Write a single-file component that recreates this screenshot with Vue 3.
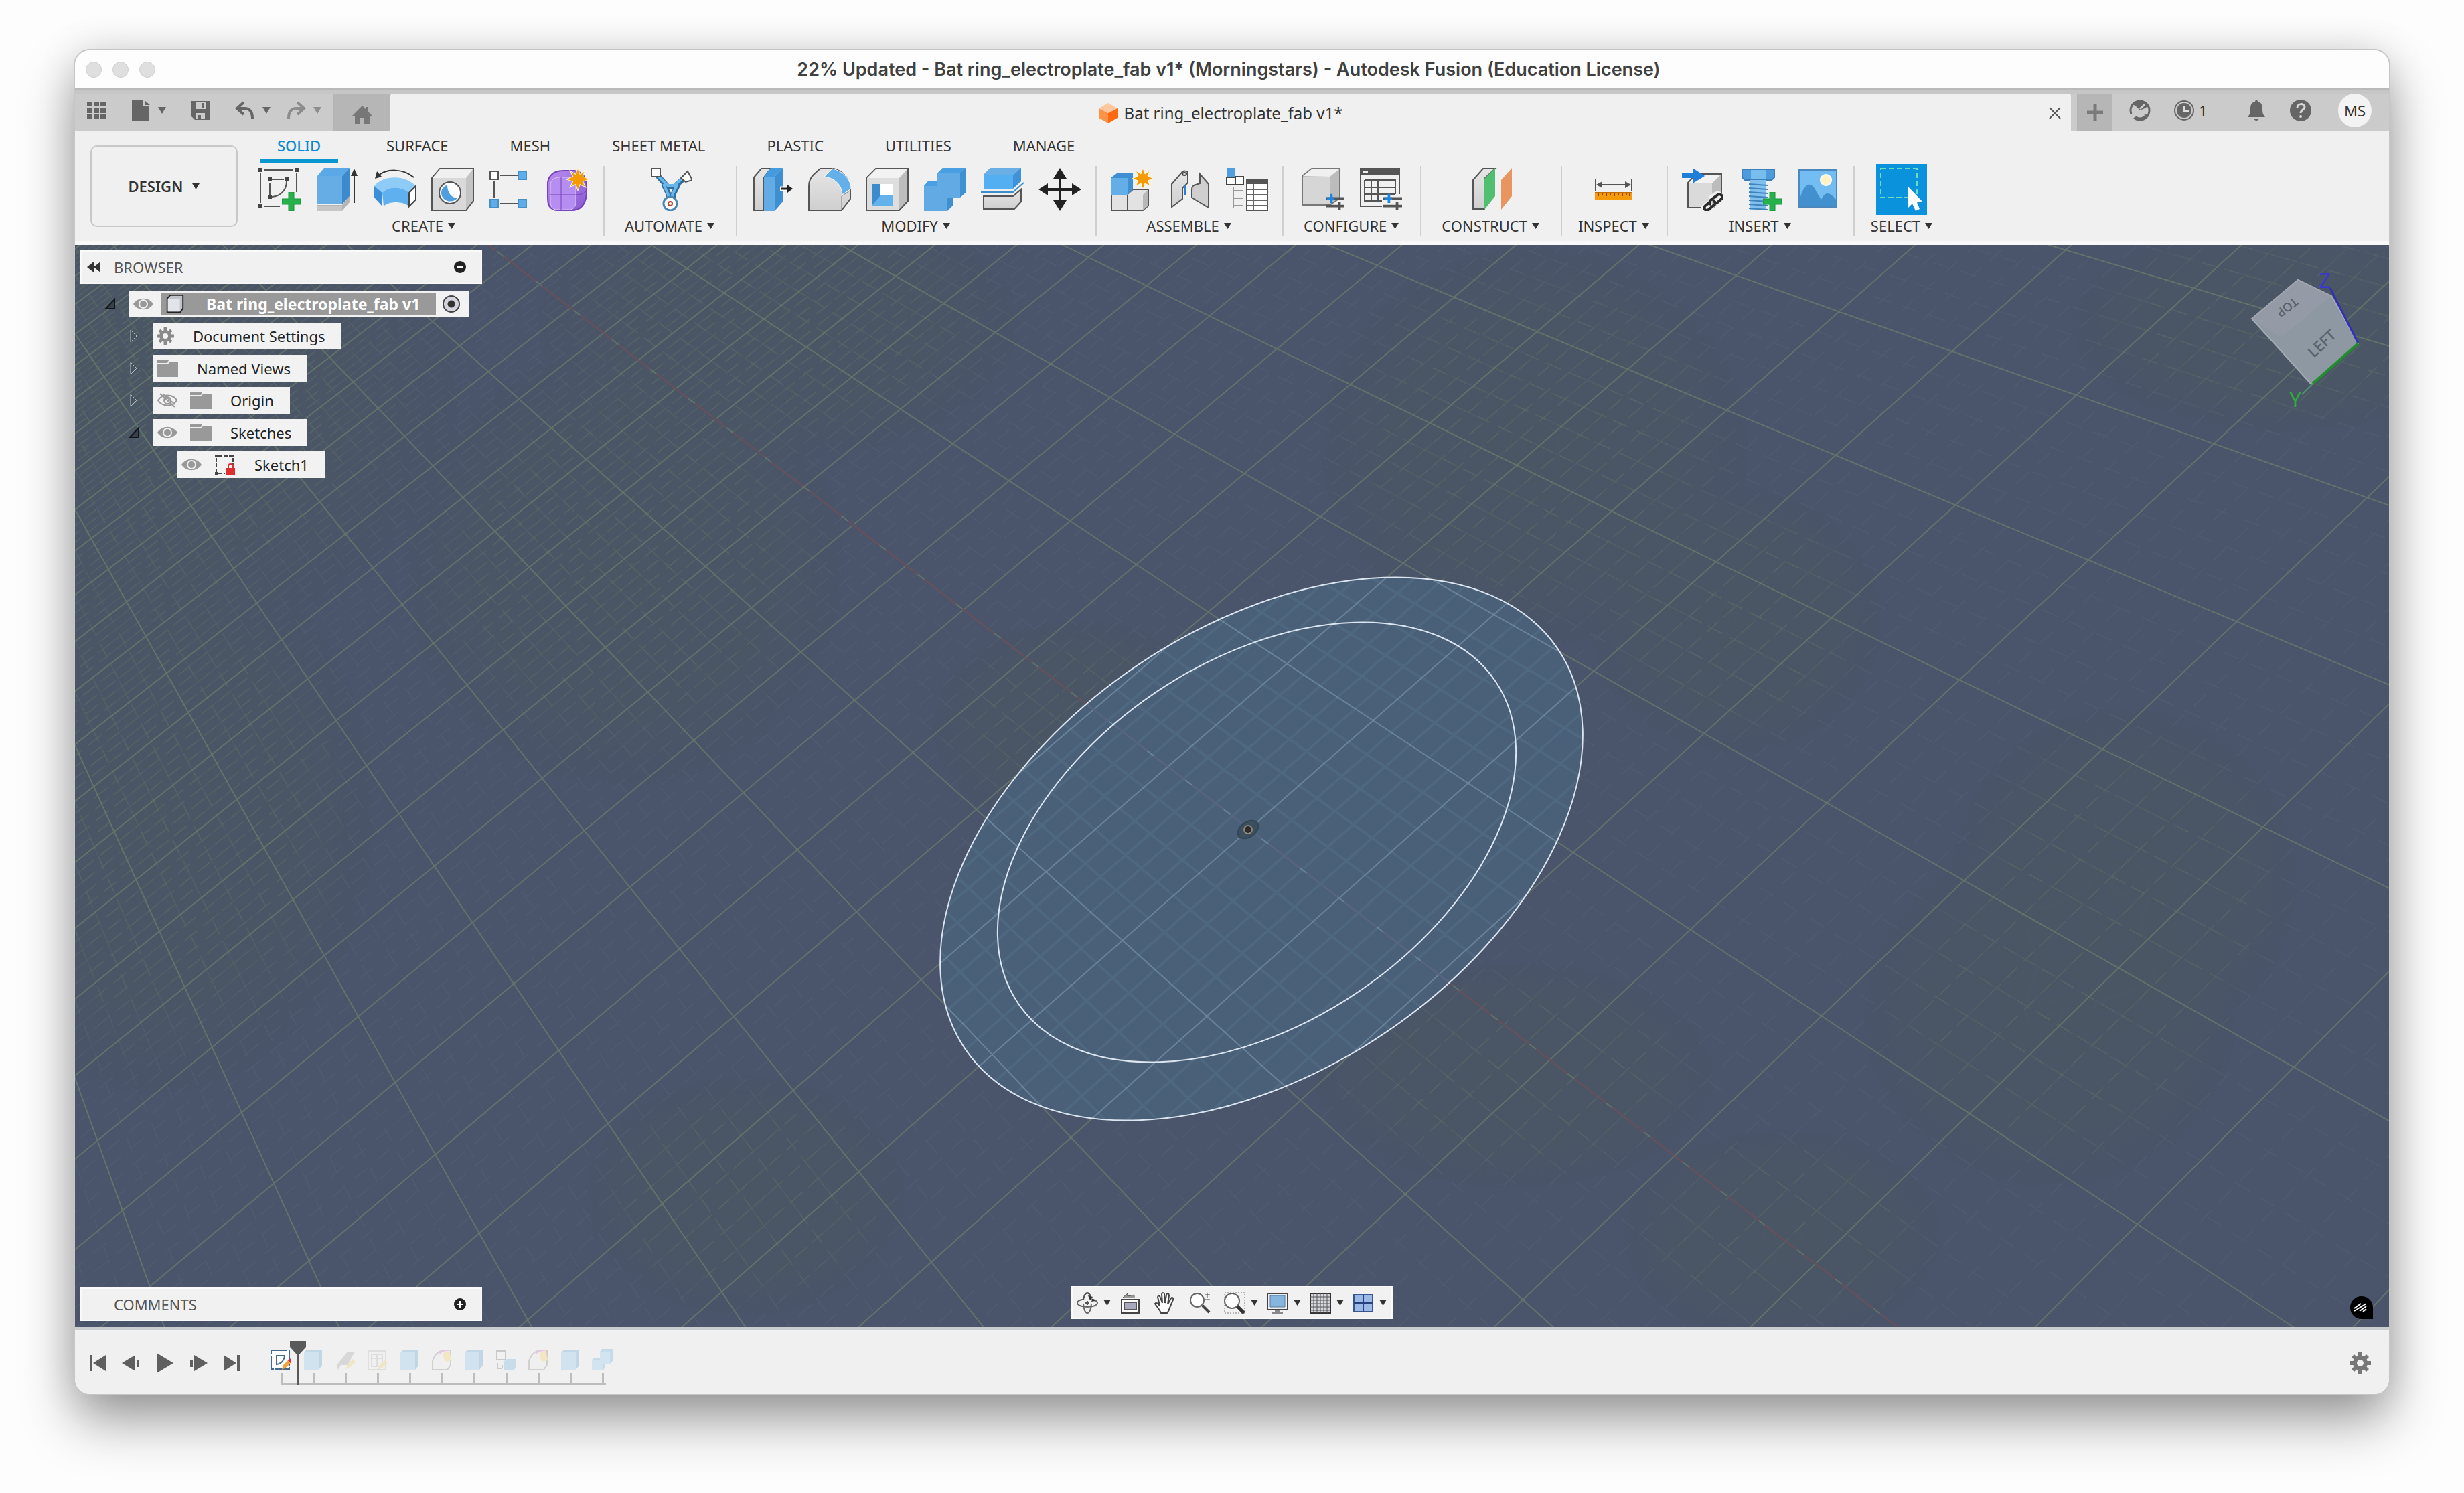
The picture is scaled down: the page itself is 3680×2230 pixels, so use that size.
<template>
  <div class="desktop">
    <svg class="sprite" aria-hidden="true">
      <defs>
        <linearGradient id="g-grey" x1="0" y1="0" x2="0" y2="1">
          <stop offset="0" stop-color="#e6e6e6" /><stop offset="1" stop-color="#cfcfcf" />
        </linearGradient>
        <linearGradient id="g-purple" x1="0" y1="0" x2="1" y2="1">
          <stop offset="0" stop-color="#b98cf0" /><stop offset="1" stop-color="#8a5ad0" />
        </linearGradient>

        <symbol id="i-caret" viewBox="0 0 14 12"><path d="M1 1h12L7 11z" fill="currentColor" /></symbol>
        <symbol id="i-apps" viewBox="0 0 32 32">
          <path d="M2 3h8v7H2zM12 3h8v7h-8zM22 3h8v7h-8zM2 12h8v8H2zM12 12h8v8h-8zM22 12h8v8h-8zM2 22h8v7H2zM12 22h8v7h-8zM22 22h8v7h-8z" fill="#666" />
        </symbol>
        <symbol id="i-file" viewBox="0 0 32 32">
          <path d="M3 0h17v10h9v22H3z" fill="#666" /><path d="M22 1l8 7h-8z" fill="#666" />
        </symbol>
        <symbol id="i-save" viewBox="0 0 32 32">
          <path d="M2 2h28v28H7l-5-5z" fill="#666" /><path d="M8 4h16v10H8zM9 20h13v9H9z" fill="#cbcbcb" />
          <path d="M17 5h4v7h-4zM12 23h4v6h-4z" fill="#666" />
        </symbol>
        <symbol id="i-undo" viewBox="0 0 32 32">
          <path d="M14 4L4 13l10 9M5 13h10c8 0 12 5 12 15" fill="none" stroke="#666" stroke-width="4" />
        </symbol>
        <symbol id="i-redo" viewBox="0 0 32 32">
          <path d="M18 4l10 9-10 9M27 13H17C9 13 5 18 5 28" fill="none" stroke="#8d8d8d" stroke-width="4" />
        </symbol>
        <symbol id="i-home" viewBox="0 0 32 32">
          <path d="M16 3L1 18h4v12h8v-9h6v9h8V18h4l-6-6V5h-4v3z" fill="#777" />
        </symbol>
        <symbol id="i-doc" viewBox="0 0 32 32">
          <path d="M16 1l14 8-14 7L2 9z" fill="#ffc79e" /><path d="M2 9l14 7v15L2 23z" fill="#ff9345" />
          <path d="M30 9l-14 7v15l14-8z" fill="#ff6a10" />
        </symbol>
        <symbol id="i-ext" viewBox="0 0 32 32">
          <circle cx="16" cy="16" r="14" fill="none" stroke="#666" stroke-width="3" /><path d="M5 6C12-1 25 1 30 10L16 16z" fill="#666" />
          <path d="M27 22c-4 8-13 10-20 5l6-4z" fill="#666" />
          <path d="M9 11l12 12c-4 3-8 2-11-1l-5 5-2-3 5-5c-2-3-2-6 1-8zM16 14l7-7M20 19l7-7" fill="#cbcbcb" stroke="#cbcbcb" stroke-width="3" />
        </symbol>
        <symbol id="i-clock" viewBox="0 0 32 32">
          <circle cx="16" cy="16" r="14" fill="none" stroke="#666" stroke-width="2" /><circle cx="16" cy="16" r="11" fill="#666" />
          <path d="M16 9v8h7" fill="none" stroke="#ddd" stroke-width="2" />
        </symbol>
        <symbol id="i-bell" viewBox="0 0 32 32">
          <path d="M14 3c0-3 4-3 4 0 6 1 7 6 7 11 0 6 1 8 4 12H3c3-4 4-6 4-12C7 9 8 4 14 3z" fill="#666" />
          <path d="M12 28h8c-1 4-7 4-8 0z" fill="#666" />
        </symbol>
        <symbol id="i-help" viewBox="0 0 32 32">
          <circle cx="16" cy="16" r="16" fill="#666" />
          <path d="M11 12c0-7 11-7 11-1 0 4-6 4-6 9" fill="none" stroke="#d8d8d8" stroke-width="3" /><circle cx="16" cy="25" r="2" fill="#d8d8d8" />
        </symbol>

        <symbol id="i-star" viewBox="0 0 32 32">
          <path d="M16 0l3 9 7-5-3 8 9 4-9 3 4 8-8-4-3 9-3-9-8 4 4-8-9-3 9-4-4-8 8 5z" fill="#f59b00" stroke="#fff6dc" />
        </symbol>
        <symbol id="i-plus-green" viewBox="0 0 28 28">
          <path d="M10 0h8v10h10v8H18v10h-8V18H0v-8h10z" fill="#25b24a" stroke="#1d9440" />
        </symbol>

        <symbol id="i-sketch" viewBox="0 0 64 64">
          <g fill="none" stroke="#555" stroke-width="2"><path d="M8 3h44M3 8v44M8 57h24M57 8v28" /><path d="M20 17h18M17 22v18M42 20c0 12-8 22-22 23" /></g>
          <path d="M0 0h6v6H0zM54 0h6v6h-6zM0 54h6v6H0zM14 14h6v6h-6zM39 14h6v6h-6zM14 40h6v6h-6z" fill="#444" />
          <use href="#i-plus-green" x="35" y="36" width="28" height="28" />
        </symbol>
        <symbol id="i-extrude" viewBox="0 0 64 64">
          <path d="M2 55h37l11-13v9L39 64H2z" fill="#b5b5b5" /><path d="M2 56h37v8H2z" fill="#c6c6c6" />
          <path d="M2 12L12 0h38L39 12z" fill="#5ba8e6" /><path d="M2 12h37v42H2z" fill="#66ade6" />
          <path d="M39 12L50 0v42L39 54z" fill="#3c89cb" />
          <path d="M57 52V8" stroke="#333" stroke-width="2" /><path d="M57 1l5 11H52z" fill="#333" />
        </symbol>
        <symbol id="i-revolve" viewBox="0 0 64 64">
          <path d="M6 12C20 0 44 1 60 14" fill="none" stroke="#333" stroke-width="2" /><path d="M2 16l3-11 7 8z" fill="#333" />
          <path d="M1 27C14 10 48 10 63 27L53 37C42 27 22 27 13 37z" fill="#8ecbf7" />
          <path d="M13 37C22 27 42 27 53 37v20c-10-8-30-8-38 0z" fill="#5fb0ee" /><path d="M1 27l12 10v20L1 44z" fill="#3a8fd6" />
          <path d="M63 27v20L53 57V37z" fill="#fff" stroke="#444" stroke-width="2" />
        </symbol>
        <symbol id="i-hole" viewBox="0 0 64 64">
          <path d="M1 15L13 1h50v48L52 63H1z" fill="#c4c4c4" stroke="#555" stroke-width="2" /><path d="M2 15h50v47H2z" fill="#d9d9d9" />
          <path d="M2 15L13 2h49L52 15z" fill="#f0f0f0" />
          <circle cx="28" cy="37" r="16" fill="#fff" stroke="#555" stroke-width="2" />
          <path d="M24 25c0 12 6 19 15 20-8 9-24 4-24-8 0-5 4-10 9-12z" fill="#4f9fe0" />
        </symbol>
        <symbol id="i-pattern" viewBox="0 0 64 64">
          <path d="M17 11h26M17 53h26M8 20v24" stroke="#555" stroke-width="2" /><path d="M2 5h12v12H2z" fill="#fff" stroke="#555" stroke-width="2" />
          <path d="M44 5h12v12H44zM2 47h12v12H2zM44 47h12v12H44z" fill="#5cade9" stroke="#4a8fc4" stroke-width="2" />
        </symbol>
        <symbol id="i-form" viewBox="0 0 64 64">
          <path d="M2 22C4 8 14 3 30 4h12c12 2 18 10 18 24v12c-2 14-8 23-22 23H16C4 62 2 54 2 44z" fill="url(#g-purple)" stroke="#7443bd" stroke-width="2" />
          <path d="M6 26c0-8 6-12 14-12h16c6 0 8 5 8 12v24c0 8-4 12-10 12H16C8 62 6 57 6 48z" fill="#b68df0" stroke="#dcc6fb" />
          <path d="M6 40h38c8 0 12-2 16-6M22 14v48" fill="none" stroke="#7443bd" />
          <use href="#i-star" x="30" y="0" width="34" height="34" />
        </symbol>
        <symbol id="i-automate" viewBox="0 0 64 64">
          <path d="M12 10l16 18h10l14-12M30 50V40L22 24M36 50V40l8-16" fill="none" stroke="#2f6f9f" stroke-width="8" />
          <path d="M12 10l16 16h10l14-12M29 52V40L22 24M35 52V40l8-16" fill="none" stroke="#69b7ea" stroke-width="4" />
          <path d="M4 1h13v12H4zM58 5l7 13-10 3-7-6z" fill="#fff" stroke="#555" stroke-width="2" />
          <circle cx="32" cy="53" r="10" fill="#fff" stroke="#4a86b4" stroke-width="3" /><circle cx="32" cy="53" r="3" fill="#fff" stroke="#b5452f" stroke-width="2" />
        </symbol>
        <symbol id="i-presspull" viewBox="0 0 64 64">
          <path d="M5 14L16 1h14L20 14v49H5z" fill="url(#g-grey)" stroke="#555" stroke-width="2" />
          <path d="M20 13L30 0h18L36 13z" fill="#459be0" /><path d="M20 13h16v51H20z" fill="#62abe5" /><path d="M36 13L48 0v50L36 64z" fill="#3f8ed2" />
          <path d="M44 31h12" stroke="#fff" stroke-width="7" /><path d="M46 31h12" stroke="#222" stroke-width="3" /><path d="M55 25l8 6-8 6z" fill="#222" />
        </symbol>
        <symbol id="i-fillet" viewBox="0 0 64 64">
          <path d="M1 63V27C1 20 4 14 8 10L18 1h20c16 4 25 17 25 33v12L50 63z" fill="url(#g-grey)" stroke="#555" stroke-width="2" />
          <path d="M24 13L36 1c18 4 28 18 28 30L51 40C50 26 42 16 24 13z" fill="#64b0ea" stroke="#fff" />
          <path d="M50 62V42l12-8" fill="none" stroke="#888" />
        </symbol>
        <symbol id="i-shell" viewBox="0 0 64 64">
          <path d="M1 15L15 1h48v48L50 63H1z" fill="#bdbdbd" stroke="#555" stroke-width="2" /><path d="M2 15h48v47H2z" fill="#dedede" /><path d="M2 15L15 2h47L50 15z" fill="#f2f2f2" />
          <path d="M9 24h32v32H9z" fill="#fff" /><path d="M9 24h13v22L9 56z" fill="#3c8bcd" /><path d="M9 56l13-15h19v15z" fill="#64b2ec" />
        </symbol>
        <symbol id="i-combine" viewBox="0 0 64 64">
          <path d="M1 27l6-7h14V8l8-8h35v36l-9 8H44v12l-8 8H1z" fill="#3f8fd3" /><path d="M1 27h20V8h34v36H36v20H1z" fill="#62aae3" />
          <path d="M21 8l8-8h35l-9 8zM1 27l6-7h14v7z" fill="#4a9ee2" />
        </symbol>
        <symbol id="i-split" viewBox="0 0 64 64">
          <path d="M4 10L14 0h46v20L48 31H4z" fill="#3f92d8" /><path d="M4 11h44v20H4z" fill="#53aff2" /><path d="M4 11L14 0h46L48 11z" fill="#69aee4" />
          <path d="M0 36h48l16-14" fill="none" stroke="#3d8fcb" stroke-width="2" />
          <path d="M4 42h44l12-10v18L50 61H4z" fill="url(#g-grey)" stroke="#555" stroke-width="2" />
        </symbol>
        <symbol id="i-move" viewBox="0 0 64 64">
          <path d="M32 10v44M10 32h44" stroke="#222" stroke-width="4" /><path d="M32 0l10 16H22zM32 64l10-16H22zM0 32l14-9v18zM64 32l-14-9v18z" fill="#222" />
        </symbol>
        <symbol id="i-component" viewBox="0 0 64 64">
          <path d="M2 39h24v24H2zM26 39l8-7h23v24l-8 7H26z" fill="#e2e2e2" stroke="#555" stroke-width="2" /><path d="M49 40l8-8v24l-8 7z" fill="#b8b8b8" />
          <path d="M2 14l8-6h24v24l-8 8H2z" fill="#3f8fd3" /><path d="M2 15h24v25H2z" fill="#64aee8" />
          <use href="#i-star" x="33" y="0" width="32" height="32" />
        </symbol>
        <symbol id="i-joint" viewBox="0 0 64 64">
          <path d="M6 24L20 8c3-5 10-4 10 0v14L22 30v16L6 58z" fill="url(#g-grey)" stroke="#555" stroke-width="2" />
          <path d="M61 24L48 9v14l-9 3c-3 2-3 4-3 8v10l8 5 17 10z" fill="#cfcfcf" stroke="#555" stroke-width="2" />
          <path d="M26 26v14" stroke="#2a7fd0" stroke-width="2" /><ellipse cx="25" cy="9" rx="3" ry="2" fill="none" stroke="#444" stroke-width="2" />
        </symbol>
        <symbol id="i-bom" viewBox="0 0 64 64">
          <path d="M2 0h13v13H2z" fill="#4f9fe0" /><path d="M2 14h13v11H2zM15 13h12v12H15z" fill="#fff" stroke="#444" stroke-width="2" />
          <path d="M12 28v32M12 34h14M12 45h14M12 56h14" stroke="#999" stroke-width="2" /><path d="M32 17h32v46H32z" fill="#fff" stroke="#555" stroke-width="2" />
          <path d="M31 16h34v8H31z" fill="#555" /><path d="M42 24v39M32 32h32M32 40h32M32 48h32M32 56h32" stroke="#666" stroke-width="2" />
        </symbol>
        <symbol id="i-adjust" viewBox="0 0 30 30">
          <path d="M0 9h30M0 21h30" stroke="#555" stroke-width="4" /><path d="M22 15v12" stroke="#555" stroke-width="4" /><path d="M9 2v14M2 9h12" stroke="#1e86e0" stroke-width="4" />
        </symbol>
        <symbol id="i-configure" viewBox="0 0 64 64">
          <path d="M1 12L15 1h42v44L42 55H1z" fill="#bcbcbc" stroke="#777" stroke-width="2" /><path d="M2 13h40v41H2z" fill="#d6d6d6" /><path d="M2 12L15 2h41L42 13z" fill="#f0f0f0" />
          <use href="#i-adjust" x="36" y="37" width="28" height="28" />
        </symbol>
        <symbol id="i-conftable" viewBox="0 0 64 64">
          <path d="M2 1h58v38M2 1v56h32" fill="none" stroke="#555" stroke-width="2" /><path d="M1 0h60v11H1z" fill="#555" /><path d="M5 4h8v4H5z" fill="#eee" />
          <path d="M8 18h46v21M8 18v31h26M8 29h46M8 39h46M18 18v31M28 18v31" fill="none" stroke="#555" stroke-width="2" />
          <use href="#i-adjust" x="36" y="37" width="28" height="28" />
        </symbol>
        <symbol id="i-plane" viewBox="0 0 64 64">
          <path d="M5 18L20 1h18L22 16v45H5z" fill="url(#g-grey)" stroke="#555" stroke-width="2" />
          <path d="M22 16L38 0v42L22 62z" fill="#50c070" /><path d="M47 18L63 0v42L47 62z" fill="#e8955f" />
        </symbol>
        <symbol id="i-measure" viewBox="0 0 64 64">
          <path d="M5 17v17M59 17v17M10 25h44" stroke="#555" stroke-width="2" /><path d="M6 25l9-5v10zM58 25l-9-5v10z" fill="#555" />
          <path d="M4 36h56v12H4z" fill="#f59b0b" /><path d="M4 37h56" stroke="#c46a00" stroke-width="2" />
          <path d="M9 37v5M15 37v3M21 37v5M27 37v3M33 37v5M39 37v3M45 37v5M51 37v3M56 37v5" stroke="#8a4a00" stroke-width="2" />
        </symbol>
        <symbol id="i-derive" viewBox="0 0 64 64">
          <path d="M10 22L22 9h38v36L48 59H10z" fill="#bcbcbc" stroke="#555" stroke-width="2" /><path d="M11 23h35v35H11z" fill="#dadada" /><path d="M11 23L22 10h37L46 23z" fill="#f2f2f2" />
          <path d="M1 8h16V0l18 12-18 11v-8H1z" fill="#1e7fdb" />
          <g fill="none"><path d="M44 51l-8 5c-8 7 0 10 5 5l6-6M48 53l7-5c8-6 2-12-4-8l-8 6" stroke="#f0f0f0" stroke-width="8" />
          <path d="M44 50l-7 5c-6 5 0 11 5 6l7-6c4-4 0-6-2-5M45 54c-3 0-4-4 0-7l8-6c6-5 11 2 6 6l-7 6" stroke="#2b2b2b" stroke-width="4" /></g>
        </symbol>
        <symbol id="i-bolt" viewBox="0 0 64 64">
          <path d="M5 2h48v12l-4 4H9l-4-4z" fill="#4d9bdc" stroke="#3b7fb8" stroke-width="2" /><path d="M18 3h22v14H18z" fill="#77bdee" /><path d="M17 18h24v44H17z" fill="#7fc0ee" />
          <path d="M15 24l28 2M15 30l28 2M15 36l28 2M15 42l28 2M15 48l28 2M15 54l28 2M15 60l28 2" stroke="#3f83bb" stroke-width="2" />
          <use href="#i-plus-green" x="36" y="36" width="28" height="28" />
        </symbol>
        <symbol id="i-canvas" viewBox="0 0 64 64">
          <path d="M4 3h56v55H4z" fill="#74bdf3" stroke="#4a88bd" stroke-width="2" /><path d="M5 46C12 22 22 18 30 36l7 11c6-12 12-12 22 0v10H5z" fill="#4390cf" />
          <circle cx="44" cy="18" r="8" fill="#fff3c4" stroke="#fff" stroke-width="2" />
        </symbol>
        <symbol id="i-select" viewBox="0 0 76 76">
          <path d="M0 0h76v76H0z" fill="#0a92dd" /><path d="M7 7h54v43H7z" fill="none" stroke="#6fdcc0" stroke-width="2" stroke-dasharray="8 4" />
          <path d="M48 34v31l6-6 5 11 6-3-4-10h9z" fill="#fff" />
        </symbol>

        <symbol id="i-eye" viewBox="0 0 32 32">
          <path d="M1 16C8 5 24 5 31 16 24 27 8 27 1 16z" fill="#999" /><circle cx="16" cy="16" r="6" fill="none" stroke="#eee" stroke-width="2" />
        </symbol>
        <symbol id="i-eye-off" viewBox="0 0 32 32">
          <path d="M2 16C8 6 24 6 30 16 24 26 8 26 2 16zM5 6l22 20M9 6l18 16" fill="none" stroke="#999" stroke-width="2" /><circle cx="16" cy="16" r="5" fill="none" stroke="#999" stroke-width="2" />
        </symbol>
        <symbol id="i-folder" viewBox="0 0 32 32"><path d="M0 4h18l-2 4H0zM0 10h17l2-4h13v23H0z" fill="#999" /></symbol>
        <symbol id="i-gear" viewBox="0 0 32 32">
          <path d="M13 0h6v6h-6zM13 26h6v6h-6zM0 13h6v6H0zM26 13h6v6h-6zM3 7l4-4 5 5-4 4zM25 3l4 4-5 5-4-4zM3 25l4 4 5-5-4-4zM29 25l-4 4-5-5 4-4z" fill="currentColor" />
          <circle cx="16" cy="16" r="8" fill="none" stroke="currentColor" stroke-width="6" />
        </symbol>
        <symbol id="i-body" viewBox="0 0 32 32">
          <path d="M4 7l5-5h20v21l-4 6H4z" fill="#c3c3cc" stroke="#222" stroke-width="2" /><path d="M5 8h19v20H5z" fill="#e3e3ea" />
        </symbol>
        <symbol id="i-sketchlock" viewBox="0 0 32 32">
          <path d="M6 3h20M3 6v22M6 29h10M28 6v10" stroke="#444" stroke-width="2" stroke-dasharray="6 2" /><path d="M1 1h4v4H1zM26 1h4v4h-4zM1 27h4v4H1z" fill="#444" />
          <path d="M18 21h13v11H18z" fill="#dd2f2f" /><path d="M21 21v-3c0-4 7-4 7 0v3" fill="none" stroke="#dd2f2f" stroke-width="2" />
        </symbol>
        <symbol id="i-closed" viewBox="0 0 20 20"><path d="M5 1v18l9-9z" fill="#48535e" stroke="#b4bcc4" /></symbol>
        <symbol id="i-open" viewBox="0 0 20 20"><path d="M17 3v14H4z" fill="#39404a" stroke="#11151c" stroke-width="2" /></symbol>

        <symbol id="i-orbit" viewBox="0 0 32 32">
          <g fill="none" stroke="#666" stroke-width="2"><ellipse cx="16" cy="16" rx="6" ry="15" /><ellipse cx="16" cy="16" rx="15" ry="6" /></g>
          <path d="M10 8h13v9H10z" fill="#f1f1f1" /><path d="M10 12c1-14 11-14 12 0M13 16h6M16 13v6" fill="none" stroke="#555" stroke-width="2" /><path d="M17 5l7 2-4 5zM24 9l4 4-6 1z" fill="#333" />
        </symbol>
        <symbol id="i-look" viewBox="0 0 32 32">
          <path d="M3 11h26v20H3z" fill="#fff" stroke="#444" stroke-width="2" /><path d="M7 15h18v11H7z" fill="#a9a9bd" stroke="#555" stroke-width="2" /><path d="M5 8l7-6v4l10-2v5" fill="#999" stroke="#555" />
        </symbol>
        <symbol id="i-hand" viewBox="0 0 32 32">
          <path d="M10 31C8 26 4 22 1 17c1-2 4-1 7 3L5 7c1-3 3-2 4 1l3 8-1-13c1-3 4-2 4 0l1 13 2-12c1-3 4-2 4 1l-2 13 5-9c2-2 4 0 3 2l-5 12c-1 4-2 6-4 8z" fill="#fff" stroke="#444" stroke-width="2" />
        </symbol>
        <symbol id="i-zoom" viewBox="0 0 32 32">
          <circle cx="12" cy="12" r="10" fill="#fff" stroke="#666" stroke-width="2" /><path d="M20 20l10 10" stroke="#444" stroke-width="4" /><path d="M24 4h7M27 1v7M24 11h7" stroke="#444" />
        </symbol>
        <symbol id="i-fit" viewBox="0 0 32 32">
          <path d="M1 1h30v30H1z" fill="none" stroke="#777" stroke-dasharray="2 2" /><circle cx="12" cy="13" r="11" fill="#fff" stroke="#666" stroke-width="2" /><path d="M20 21l10 10" stroke="#333" stroke-width="5" />
        </symbol>
        <symbol id="i-display" viewBox="0 0 32 32">
          <path d="M1 2h30v24H1z" fill="#eee" stroke="#444" stroke-width="2" /><path d="M5 5h22v17H5z" fill="#86b6dd" stroke="#55789a" /><path d="M12 26h8v4h4v2H8v-2h4z" fill="#888" />
        </symbol>
        <symbol id="i-gridset" viewBox="0 0 32 32">
          <path d="M1 2h30v29H1z" fill="#d5d5dc" stroke="#333" stroke-width="2" /><path d="M6 2v29M11 2v29M16 2v29M21 2v29M26 2v29M1 7h30M1 12h30M1 17h30M1 22h30M1 27h30" stroke="#555" />
        </symbol>
        <symbol id="i-panes" viewBox="0 0 32 32">
          <path d="M2 4h28v25H2z" fill="#9db9e8" stroke="#37568f" stroke-width="2" /><path d="M16 4v25M2 16h28" stroke="#27427c" stroke-width="2" />
        </symbol>

        <symbol id="i-first" viewBox="0 0 32 32"><path d="M4 4h4v24H4zM28 4v24L9 16z" fill="#5f5f5f" /></symbol>
        <symbol id="i-prev" viewBox="0 0 32 32"><path d="M22 4v24L2 16zM24 11h4v11h-4z" fill="#5f5f5f" /></symbol>
        <symbol id="i-play" viewBox="0 0 32 32"><path d="M4 1l25 15L4 31z" fill="#5f5f5f" /></symbol>
        <symbol id="i-next" viewBox="0 0 32 32"><path d="M10 4v24l20-12zM4 11h4v11H4z" fill="#5f5f5f" /></symbol>
        <symbol id="i-last" viewBox="0 0 32 32"><path d="M24 4h4v24h-4zM4 4v24l19-12z" fill="#5f5f5f" /></symbol>

        <symbol id="t-sketch" viewBox="0 0 32 32">
          <path d="M2 2h27v28H2z" fill="#fff" stroke="#46698c" stroke-width="2" stroke-dasharray="24 2" /><path d="M10 10h12c-1 8-5 12-12 13z" fill="none" stroke="#46698c" stroke-width="2" /><path d="M18 31l2-7 8-8 4 4-8 8z" fill="#f2a33a" /><path d="M27 17l3-3 3 3-2 4z" fill="#d92c4a" />
        </symbol>
        <symbol id="t-extrude" viewBox="0 0 32 32">
          <path d="M3 5l5-4h22v24l-5 6H3z" fill="#9cc3df" /><path d="M3 5h22v26H3z" fill="#b9d9ee" />
        </symbol>
        <symbol id="t-pencil" viewBox="0 0 32 32"><path d="M4 24L20 4h11L20 24H10l-4 7z" fill="#c4c4c4" /><path d="M17 30l3-7 8-8 4 4-8 8z" fill="#e9dfa5" /></symbol>
        <symbol id="t-sketch2" viewBox="0 0 32 32"><path d="M3 3h26v28H3zM8 8h16v18H8zM8 14h16M16 8v18" fill="none" stroke="#d0d0d0" stroke-width="2" /><path d="M17 31l3-7 8-8 4 4-8 8z" fill="#e9dfa5" /></symbol>
        <symbol id="t-fillet" viewBox="0 0 32 32"><path d="M3 31V18C6 8 12 3 20 2h10v22l-5 7z" fill="#efefef" stroke="#b5b5b5" stroke-width="2" /><path d="M18 7L28 1l3 16-9 2z" fill="#f7dfa0" /><path d="M13 7c4-4 8-5 14-5" stroke="#e0a8e8" stroke-width="2" fill="none" /></symbol>
        <symbol id="t-pattern" viewBox="0 0 32 32"><path d="M3 3h13v13H3zM4 21v8h7M11 24v5" fill="none" stroke="#ababab" stroke-width="2" /><path d="M14 18l4-3h14v12l-4 5H14z" fill="#a9cde6" /></symbol>
        <symbol id="t-combine" viewBox="0 0 32 32"><path d="M1 16l4-3h8V4l3-4h16v18l-4 4h-7v6l-4 4H1z" fill="#a4cbe6" /><path d="M1 16h12V4h15v18H17v10H1z" fill="#b9dbf0" /></symbol>
      </defs>
    </svg>

    <main class="window">
      <header class="titlebar">
        <span class="lights"><i></i><i></i><i></i></span>
        <h1>22% Updated - Bat ring_electroplate_fab v1* (Morningstars) - Autodesk Fusion (Education License)</h1>
      </header>

      <div class="tabstrip">
        <nav class="quick">
          <button aria-label="Data panel"><svg class="s32"><use href="#i-apps" /></svg></button>
          <button class="pair" aria-label="File"><svg class="s32"><use href="#i-file" /></svg><svg class="caret-lg"><use href="#i-caret" /></svg></button>
          <button aria-label="Save"><svg class="s32"><use href="#i-save" /></svg></button>
          <span class="history">
            <button class="pair" aria-label="Undo"><svg class="s32"><use href="#i-undo" /></svg><svg class="caret-lg"><use href="#i-caret" /></svg></button>
            <button class="pair pair--off" aria-label="Redo"><svg class="s32"><use href="#i-redo" /></svg><svg class="caret-lg"><use href="#i-caret" /></svg></button>
          </span>
        </nav>
        <button class="home" aria-label="Home"><svg class="s32"><use href="#i-home" /></svg></button>
        <div class="doctab">
          <span class="doctab__name"><svg class="s32"><use href="#i-doc" /></svg>Bat ring_electroplate_fab v1*</span>
          <button class="doctab__close" aria-label="Close tab">
            <svg viewBox="0 0 20 20"><path d="M2 2l16 16M18 2L2 18" stroke="#555" stroke-width="2" /></svg>
          </button>
        </div>
        <button class="newtab" aria-label="New tab">
          <svg viewBox="0 0 26 26"><path d="M13 1v24M1 13h24" stroke="#7a7a7a" stroke-width="5" /></svg>
        </button>
        <div class="account">
          <button aria-label="Extensions"><svg class="s32"><use href="#i-ext" /></svg></button>
          <button class="jobs" aria-label="Job status"><svg class="s32"><use href="#i-clock" /></svg>1</button>
          <button aria-label="Notifications"><svg class="s32"><use href="#i-bell" /></svg></button>
          <button aria-label="Help"><svg class="s32"><use href="#i-help" /></svg></button>
          <button class="avatar">MS</button>
        </div>
      </div>

      <section class="ribbon">
        <button class="workspace">DESIGN<svg class="caret"><use href="#i-caret" /></svg></button>
        <div class="ribbon__body">
          <nav class="modes">
            <button v-for="m in modes" :key="m" :class="{ active: m === 'SOLID' }">{{ m }}</button>
          </nav>
          <div class="groups">
            <div v-for="g in groups" :key="g.name" class="group" :class="{ 'group--tight': g.tight }">
              <div class="group__icons">
                <button v-for="icon in g.icons" :key="icon" :aria-label="icon">
                  <svg class="tool" :class="{ 'tool--big': icon === 'select' }"><use :href="'#i-' + icon" /></svg>
                </button>
              </div>
              <button class="group__label">{{ g.name }}<svg class="caret"><use href="#i-caret" /></svg></button>
            </div>
          </div>
        </div>
      </section>

      <section class="viewport">
        <svg class="scene" viewBox="0 0 3456 1616" preserveAspectRatio="xMidYMid slice">
          <defs>
            <radialGradient id="blob"><stop offset="0" stop-color="#fff" /><stop offset=".6" stop-color="#fff" stop-opacity=".8" /><stop offset="1" stop-color="#fff" stop-opacity="0" /></radialGradient>
            <mask id="tint">
              <ellipse v-for="(b, i) in patches" :key="i" :cx="b[0]" :cy="b[1]" :rx="b[2]" :ry="b[3]" fill="url(#blob)" />
            </mask>
            <clipPath id="ring"><ellipse rx="534" ry="331" transform="translate(1772 902) rotate(-34)" /></clipPath>
          </defs>
          <rect width="3456" height="1616" fill="#4a546a" />
          <rect width="3456" height="1616" fill="#4b5960" mask="url(#tint)" opacity=".55" />
          <path :d="minorPath" class="minor" />
          <g mask="url(#tint)"><path :d="minorPath" class="minor minor--green" /></g>
          <path :d="majorPath" class="major" />
          <path :d="axisPath" class="axis" />
          <g clip-path="url(#ring)">
            <rect x="1200" y="400" width="1200" height="1000" fill="#4a6078" />
            <path :d="minorPath" class="minor minor--blue" />
            <path :d="majorPath" class="major major--blue" />
            <path :d="axisPath" class="axis axis--blue" />
          </g>
          <g class="profile">
            <ellipse rx="534" ry="331" transform="translate(1772 902) rotate(-34)" />
            <ellipse rx="430" ry="270" transform="translate(1765 892) rotate(-34)" />
          </g>
          <g transform="translate(1752 873)">
            <ellipse rx="17" ry="11" transform="rotate(-34)" fill="#3b4f60" stroke="#33454f" stroke-width="2" />
            <circle r="6" fill="#2c2c2c" stroke="#8f8776" stroke-width="2" />
          </g>
        </svg>

        <aside class="browser">
          <header class="panel">
            <svg class="rewind" viewBox="0 0 20 16"><path d="M10 0v16L0 8zM20 0v16l-10-8z" fill="#333" /></svg>
            <span>BROWSER</span>
            <button aria-label="Collapse browser"><svg viewBox="0 0 20 20"><circle cx="10" cy="10" r="9" fill="#222" /><path d="M5 10h10" stroke="#fff" stroke-width="3" /></svg></button>
          </header>
          <ul class="tree">
            <li v-for="row in tree" :key="row.name" :class="'depth-' + row.depth">
              <svg class="twist"><use v-if="row.twist" :href="'#i-' + row.twist" /></svg>
              <div v-if="row.depth === 0" class="node node--root">
                <svg class="s32"><use href="#i-eye" /></svg>
                <span class="node__sel"><svg class="s32"><use href="#i-body" /></svg>{{ row.name }}</span>
                <input type="radio" checked aria-label="Activate component" />
              </div>
              <div v-else class="node">
                <svg v-for="ic in row.icons" :key="ic" :class="ic === 'gear' ? 's26' : 's32'"><use :href="'#i-' + ic" /></svg>
                <span class="node__name">{{ row.name }}</span>
              </div>
            </li>
          </ul>
        </aside>

        <svg class="cube" viewBox="0 0 200 240">
          <path d="M80 32l50 24 40 71-70 61-89-98z" fill="#8d98a2" stroke="#a5abb5" stroke-width="2" />
          <path d="M11 90L80 32l50 24-75 62z" fill="#9c9ca9" opacity=".5" />
          <path d="M128 44l42 83" stroke="#3230b8" stroke-width="3" /><path d="M170 127l-68 60" stroke="#1f8f2c" stroke-width="4" /><path d="M102 187l-16 16" stroke="#4f9670" stroke-width="2" />
          <text x="120" y="44" text-anchor="middle" fill="#3a36d8">Z</text>
          <text x="76" y="222" text-anchor="middle" fill="#2fae3a">Y</text>
          <text class="face" transform="translate(121 133) rotate(-43)" text-anchor="middle">LEFT</text>
          <text class="face face--top" transform="translate(60 68) rotate(142)" text-anchor="middle">TOP</text>
        </svg>

        <div class="panel comments">
          <span>COMMENTS</span>
          <button aria-label="Add comment"><svg viewBox="0 0 20 20"><circle cx="10" cy="10" r="9" fill="#222" /><path d="M5 10h10M10 5v10" stroke="#fff" stroke-width="2" /></svg></button>
        </div>

        <nav class="navbar">
          <button v-for="n in navTools" :key="n.icon" :class="{ menu: n.menu }" :aria-label="n.icon">
            <svg class="s32"><use :href="'#i-' + n.icon" /></svg>
            <svg v-if="n.menu" class="caret"><use href="#i-caret" /></svg>
          </button>
        </nav>

        <button class="assistant" aria-label="Assistant">
          <svg viewBox="0 0 32 32"><path d="M6 17l10-7M6 21l18-11M14 21l10-7M19 22l5-4" stroke="#fff" stroke-width="2" /></svg>
        </button>
      </section>

      <footer class="timeline">
        <div class="playback">
          <button v-for="p in playback" :key="p" :aria-label="p"><svg class="s32"><use :href="'#i-' + p" /></svg></button>
        </div>
        <div class="history-track">
          <ol class="steps">
            <li v-for="(s, i) in steps" :key="i" :class="{ future: i > 0 }">
              <svg class="s32"><use :href="'#t-' + s" /></svg>
            </li>
          </ol>
          <svg class="playhead" viewBox="0 0 24 66"><path d="M0 0h24v9L14 20v46h-4V20L0 9z" fill="#5a5a5a" /></svg>
        </div>
        <button class="prefs" aria-label="Timeline settings"><svg class="s32"><use href="#i-gear" /></svg></button>
      </footer>
    </main>
  </div>
</template>

<script setup>
const modes = ['SOLID', 'SURFACE', 'MESH', 'SHEET METAL', 'PLASTIC', 'UTILITIES', 'MANAGE']

const groups = [
  { name: 'CREATE', icons: ['sketch', 'extrude', 'revolve', 'hole', 'pattern', 'form'] },
  { name: 'AUTOMATE', icons: ['automate'] },
  { name: 'MODIFY', icons: ['presspull', 'fillet', 'shell', 'combine', 'split', 'move'] },
  { name: 'ASSEMBLE', icons: ['component', 'joint', 'bom'] },
  { name: 'CONFIGURE', icons: ['configure', 'conftable'] },
  { name: 'CONSTRUCT', icons: ['plane'] },
  { name: 'INSPECT', icons: ['measure'], tight: true },
  { name: 'INSERT', icons: ['derive', 'bolt', 'canvas'] },
  { name: 'SELECT', icons: ['select'], tight: true },
]

const tree = [
  { name: 'Bat ring_electroplate_fab v1', depth: 0, twist: 'open' },
  { name: 'Document Settings', depth: 1, twist: 'closed', icons: ['gear'] },
  { name: 'Named Views', depth: 1, twist: 'closed', icons: ['folder'] },
  { name: 'Origin', depth: 1, twist: 'closed', icons: ['eye-off', 'folder'] },
  { name: 'Sketches', depth: 1, twist: 'open', icons: ['eye', 'folder'] },
  { name: 'Sketch1', depth: 2, twist: null, icons: ['eye', 'sketchlock'] },
]

const navTools = [
  { icon: 'orbit', menu: true },
  { icon: 'look' },
  { icon: 'hand' },
  { icon: 'zoom' },
  { icon: 'fit', menu: true },
  { icon: 'display', menu: true },
  { icon: 'gridset', menu: true },
  { icon: 'panes', menu: true },
]

const playback = ['first', 'prev', 'play', 'next', 'last']
const steps = ['sketch', 'extrude', 'pencil', 'sketch2', 'extrude', 'fillet', 'extrude', 'pattern', 'fillet', 'extrude', 'combine']

// greener areas of the ground plane: cx, cy, rx, ry
const patches = [
  [60, 200, 520, 420], [120, 850, 330, 420], [820, 480, 330, 330], [1050, 120, 360, 200],
  [2180, 300, 320, 300], [2480, 560, 220, 200], [3060, 950, 260, 260], [2950, 1150, 280, 260],
  [1500, 720, 220, 160], [2150, 1240, 300, 170], [1000, 1420, 240, 180], [3300, 120, 320, 160],
  [2550, 1480, 240, 160],
]

// ground plane cell (j, i) -> screen, perspective taken from one 4 x 2 cell block
function project(j, i) {
  const u = (j + 2) / 4
  const v = (i + 1) / 2
  const w = 1 - 0.18057 * u + 0.02298 * v
  const x = (133.4 * u + 387.7 * v + 1458.3) / w - 112
  const y = (137.6 * u - 274.1 * v + 1209.1) / w - 366
  return `${x.toFixed(1)} ${y.toFixed(1)}`
}

function grid(step, skip) {
  let d = ''
  for (let n = -30 / step; n <= 9 / step; n++) {
    if (skip && n % skip === 0) continue
    d += `M${project(n * step, -10)}L${project(n * step, 9)}`
  }
  for (let n = -10 / step; n <= 9 / step; n++) {
    if (skip && n % skip === 0) continue
    d += `M${project(-34, n * step)}L${project(10, n * step)}`
  }
  return d
}

const majorPath = grid(1, 0)
const minorPath = grid(0.2, 5)
const axisPath = `M${project(-34, 0)}L${project(10, 0)}`
</script>

<style>
body { background: #fdfdfd; }
</style>

<style scoped>
* { box-sizing: border-box; }
.desktop {
  display: flex;
  min-height: 100vh;
  padding: 75px 112px 148px;
  font-family: 'Noto Sans', 'Open Sans', sans-serif;
  font-size: 22px;
  line-height: 30px;
  color: #333;
}
.sprite { position: absolute; width: 0; height: 0; }
button {
  display: flex;
  align-items: center;
  padding: 0;
  border: 0;
  background: none;
  color: inherit;
  font: inherit;
}
svg { display: block; flex: none; }
.s32 { width: 32px; height: 32px; }
.s26 { width: 26px; height: 26px; }
.caret { width: 13px; height: 11px; }
.caret-lg { width: 16px; height: 12px; }

.window {
  flex: 1;
  display: flex;
  flex-direction: column;
  min-width: 0;
  border-radius: 22px;
  overflow: hidden;
  background: #f0f0f0;
  box-shadow: 0 0 0 2px #c6c6c6, 0 40px 80px rgba(0, 0, 0, 0.38), 0 0 60px rgba(0, 0, 0, 0.12);
}
.titlebar {
  position: relative;
  display: flex;
  align-items: center;
  justify-content: center;
  height: 57px;
  padding-right: 10px;
  background: #fdfdfd;
}
.titlebar h1 {
  margin: 0;
  font-family: Inter, sans-serif;
  font-size: 27px;
  font-weight: 600;
  color: #404040;
}
.lights { position: absolute; left: 16px; display: flex; gap: 16px; }
.lights i {
  width: 24px;
  height: 24px;
  border: 1px solid #cfcfcf;
  border-radius: 50%;
  background: #dfdfdf;
}

.tabstrip {
  display: flex;
  height: 64px;
  padding-top: 8px;
  background: linear-gradient(#b9b9b9 0 2px, #c6c6c6 2px 8px, #cbcbcb 8px);
}
.quick { display: flex; align-items: center; gap: 34px; padding: 0 16px 6px; color: #666; }
.pair { gap: 8px; }
.pair--off { color: #8d8d8d; }
.history { display: flex; gap: 20px; }
.home { justify-content: center; width: 85px; padding-top: 6px; background: #b6b6b6; }
.doctab {
  position: relative;
  flex: 1;
  display: flex;
  align-items: center;
  justify-content: center;
  padding: 2px 32px 0 0;
  border-radius: 4px 4px 0 0;
  background: #f0f0f0;
  font-size: 24px;
}
.doctab__name { display: flex; align-items: center; gap: 8px; }
.doctab__close { position: absolute; right: 14px; }
.doctab__close svg { width: 20px; height: 20px; }
.newtab { justify-content: center; width: 53px; margin-left: 9px; background: #b6b6b6; }
.newtab svg { width: 26px; height: 26px; }
.account { display: flex; align-items: center; gap: 34px; padding: 0 26px 6px 25px; }
.jobs { gap: 6px; width: 74px; }
.avatar {
  justify-content: center;
  width: 50px;
  height: 50px;
  margin-left: 6px;
  border-radius: 50%;
  background: #f3f3f3;
}

.ribbon {
  display: flex;
  align-items: center;
  padding-left: 23px;
  background: #f0f0f0;
  border-bottom: 6px solid #f8f8f8;
}
.workspace {
  gap: 12px;
  justify-content: center;
  width: 220px;
  height: 122px;
  border: 2px solid #c8c8c8;
  border-radius: 10px;
  font-weight: 600;
}
.ribbon__body { padding-left: 11px; }
.modes { display: flex; gap: 40px; padding-left: 22px; }
.modes button { height: 47px; padding: 0 26px; border-bottom: 6px solid transparent; }
.modes button.active {
  margin-right: 6px;
  color: #0b8ad0;
  border-bottom-color: #0a96cf;
  font-weight: 500;
}
.groups { display: flex; padding: 5px 0 8px; }
.group {
  display: flex;
  flex-direction: column;
  align-items: center;
  padding: 0 21px 0 20px;
  border-right: 2px solid #cfcfcf;
}
.group:last-child { border-right: 0; }
.group__icons { display: flex; align-items: center; gap: 22px; height: 70px; }
.group__label { gap: 6px; height: 34px; padding: 4px 10px 0; }
.group--tight .group__label { padding: 4px 4px 0; }
.tool { width: 64px; height: 64px; }
.tool--big { width: 76px; height: 76px; }

.viewport { position: relative; flex: 1; overflow: hidden; background: #4a546a; }
.scene { position: absolute; inset: 0; width: 100%; height: 100%; }
.minor { fill: none; stroke: #5b6b7c; stroke-width: 2; stroke-dasharray: 26 18; opacity: 0.3; }
.minor--green { stroke: #60725f; stroke-dasharray: 22 12; opacity: 0.45; }
.minor--blue { stroke: #5f8299; stroke-width: 4; stroke-dasharray: none; opacity: 0.22; }
.major { fill: none; stroke: #6f836d; stroke-width: 2; opacity: 0.65; }
.major--blue { stroke: #7f9bb0; opacity: 0.6; }
.axis { fill: none; stroke: #634f5c; stroke-width: 3; stroke-dasharray: 60 12; opacity: 0.9; }
.axis--blue { stroke: #57607e; }
.profile ellipse { fill: none; stroke: #dde6f0; stroke-width: 2; }

.browser { position: absolute; top: 8px; left: 8px; }
.panel {
  display: flex;
  align-items: center;
  width: 600px;
  height: 50px;
  padding: 0 21px 0 48px;
  background: #f1f1f1;
  border: 2px solid #fafafa;
  color: #555;
}
.browser .panel { padding-left: 8px; }
.panel span { flex: 1; }
.panel button svg { width: 20px; height: 20px; }
.rewind { width: 20px; height: 16px; margin-right: 20px; }
.tree { margin: 10px 0 0; padding: 0; list-style: none; }
.tree li { display: flex; align-items: center; height: 48px; padding-bottom: 8px; }
.twist { width: 20px; height: 20px; margin-right: 18px; }
.depth-0 { padding-left: 34px; }
.depth-1 { padding-left: 70px; }
.depth-2 { padding-left: 106px; }
.node {
  display: flex;
  align-items: center;
  gap: 18px;
  height: 40px;
  padding: 0 24px 0 6px;
  background: #f2f2f2;
  color: #222;
}
.node .s26, .node .s32 { color: #8a8a8a; }
.node__name { padding-left: 10px; }
.node--root { gap: 10px; padding-right: 14px; }
.node__sel {
  display: flex;
  align-items: center;
  gap: 32px;
  height: 32px;
  padding: 0 24px 0 6px;
  background: #999;
  color: #fff;
  font-size: 23px;
  font-weight: 700;
}
.node__sel .s32 { width: 30px; height: 30px; }
.node--root input {
  appearance: none;
  width: 26px;
  height: 26px;
  margin: 0;
  border: 2px solid #444;
  border-radius: 50%;
  background: radial-gradient(#333 0 5px, #d4d4dc 6px);
}

.cube { position: absolute; top: 20px; right: 16px; width: 200px; height: 240px; font-size: 30px; }
.cube .face { font-size: 22px; font-weight: 500; fill: #56606b; }
.cube .face--top { font-size: 18px; }

.comments { position: absolute; left: 8px; bottom: 9px; }
.navbar {
  position: absolute;
  left: 50%;
  bottom: 12px;
  transform: translateX(-50%);
  display: flex;
  align-items: center;
  gap: 20px;
  height: 49px;
  padding: 0 6px;
  background: #f1f1f1;
  border: 2px solid #fafafa;
}
.navbar .menu { gap: 7px; margin-right: -8px; }
.navbar .menu:last-child { margin-right: 0; }
.assistant {
  position: absolute;
  right: 24px;
  bottom: 12px;
  width: 34px;
  height: 34px;
  border-radius: 17px 17px 0 17px;
  background: #000;
}
.assistant svg { width: 32px; height: 32px; }

.timeline {
  display: flex;
  align-items: center;
  height: 100px;
  padding: 2px 27px 0 18px;
  background: #f0f0f0;
  border-top: 5px solid #c9cdd0;
}
.playback { display: flex; gap: 18px; }
.history-track { position: relative; margin: 12px 0 0 33px; }
.steps { display: flex; margin: 0; padding: 0; list-style: none; }
.steps li { position: relative; width: 48px; padding: 0 8px 22px; }
.steps li::after {
  content: '';
  position: absolute;
  left: 24px;
  bottom: 0;
  width: 48px;
  height: 14px;
  border-left: 3px solid #bdbdbd;
  border-bottom: 4px solid #bdbdbd;
}
.steps li:last-child::after { width: 3px; }
.future svg { opacity: 0.55; }
.playhead { position: absolute; left: 38px; top: -12px; width: 24px; height: 66px; }
.prefs { margin-left: auto; color: #777; }
</style>
